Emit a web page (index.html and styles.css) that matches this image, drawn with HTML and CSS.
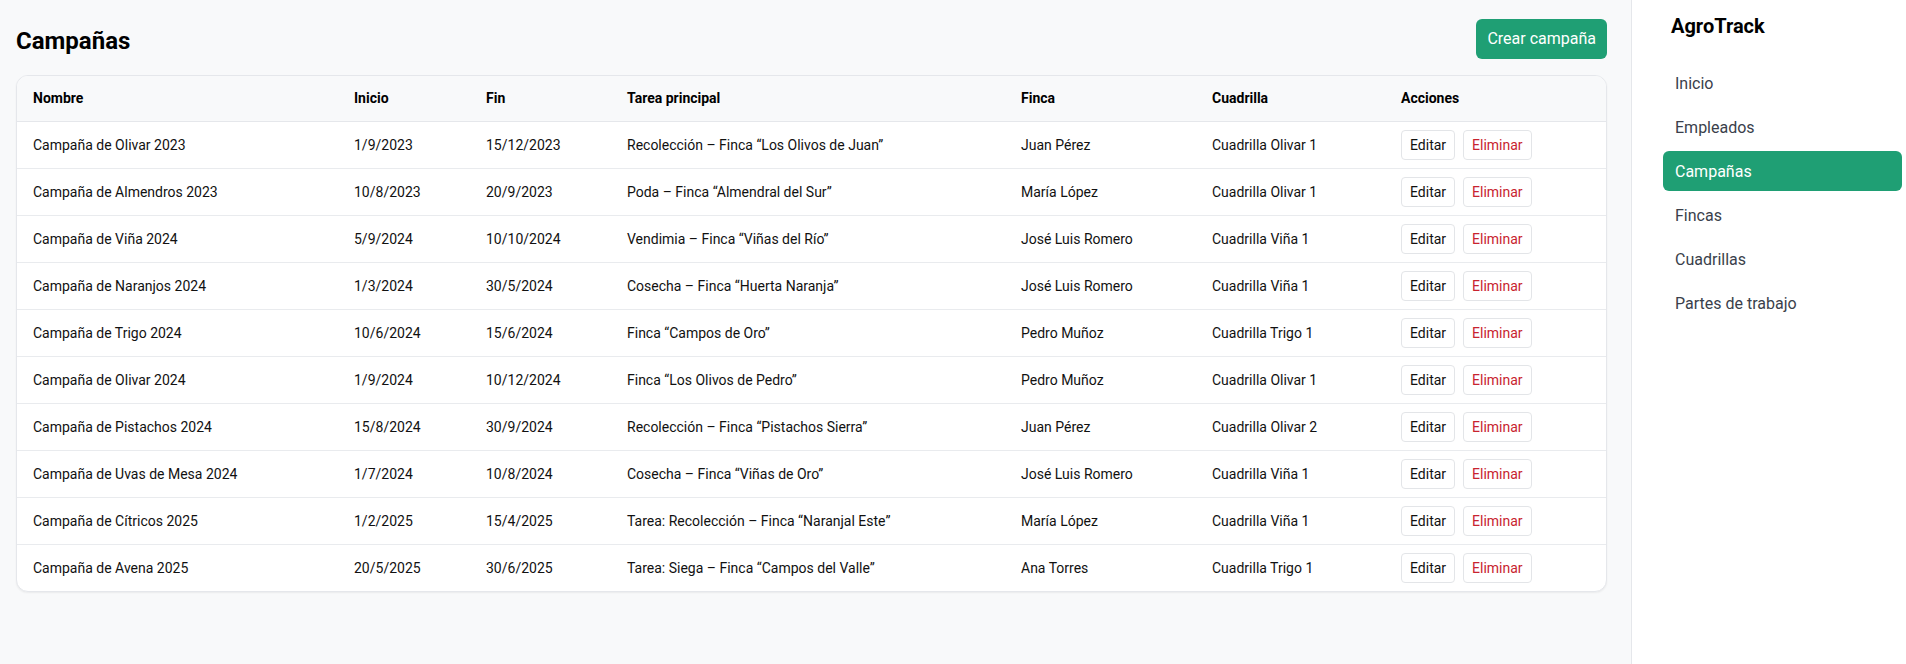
FILE: index.html
```html
<!DOCTYPE html>
<html lang="es">
<head>
<meta charset="utf-8">
<title>AgroTrack – Campañas</title>
<link rel="stylesheet" href="styles.css">
</head>
<body>
<div class="layout">
  <main class="main">
    <div class="page-header">
      <h1 class="page-title">Campañas</h1>
      <button class="btn-primary">Crear campaña</button>
    </div>
    <div class="card">
      <table class="table">
        <thead>
          <tr>
            <th class="c-nombre">Nombre</th>
            <th class="c-inicio">Inicio</th>
            <th class="c-fin">Fin</th>
            <th class="c-tarea">Tarea principal</th>
            <th class="c-finca">Finca</th>
            <th class="c-cuad">Cuadrilla</th>
            <th class="c-acc">Acciones</th>
          </tr>
        </thead>
        <tbody>
          <tr><td>Campaña de Olivar 2023</td><td>1/9/2023</td><td>15/12/2023</td><td>Recolección – Finca “Los Olivos de Juan”</td><td>Juan Pérez</td><td>Cuadrilla Olivar 1</td><td><div class="actions"><button class="btn-sm">Editar</button><button class="btn-sm danger">Eliminar</button></div></td></tr>
          <tr><td>Campaña de Almendros 2023</td><td>10/8/2023</td><td>20/9/2023</td><td>Poda – Finca “Almendral del Sur”</td><td>María López</td><td>Cuadrilla Olivar 1</td><td><div class="actions"><button class="btn-sm">Editar</button><button class="btn-sm danger">Eliminar</button></div></td></tr>
          <tr><td>Campaña de Viña 2024</td><td>5/9/2024</td><td>10/10/2024</td><td>Vendimia – Finca “Viñas del Río”</td><td>José Luis Romero</td><td>Cuadrilla Viña 1</td><td><div class="actions"><button class="btn-sm">Editar</button><button class="btn-sm danger">Eliminar</button></div></td></tr>
          <tr><td>Campaña de Naranjos 2024</td><td>1/3/2024</td><td>30/5/2024</td><td>Cosecha – Finca “Huerta Naranja”</td><td>José Luis Romero</td><td>Cuadrilla Viña 1</td><td><div class="actions"><button class="btn-sm">Editar</button><button class="btn-sm danger">Eliminar</button></div></td></tr>
          <tr><td>Campaña de Trigo 2024</td><td>10/6/2024</td><td>15/6/2024</td><td>Finca “Campos de Oro”</td><td>Pedro Muñoz</td><td>Cuadrilla Trigo 1</td><td><div class="actions"><button class="btn-sm">Editar</button><button class="btn-sm danger">Eliminar</button></div></td></tr>
          <tr><td>Campaña de Olivar 2024</td><td>1/9/2024</td><td>10/12/2024</td><td>Finca “Los Olivos de Pedro”</td><td>Pedro Muñoz</td><td>Cuadrilla Olivar 1</td><td><div class="actions"><button class="btn-sm">Editar</button><button class="btn-sm danger">Eliminar</button></div></td></tr>
          <tr><td>Campaña de Pistachos 2024</td><td>15/8/2024</td><td>30/9/2024</td><td>Recolección – Finca “Pistachos Sierra”</td><td>Juan Pérez</td><td>Cuadrilla Olivar 2</td><td><div class="actions"><button class="btn-sm">Editar</button><button class="btn-sm danger">Eliminar</button></div></td></tr>
          <tr><td>Campaña de Uvas de Mesa 2024</td><td>1/7/2024</td><td>10/8/2024</td><td>Cosecha – Finca “Viñas de Oro”</td><td>José Luis Romero</td><td>Cuadrilla Viña 1</td><td><div class="actions"><button class="btn-sm">Editar</button><button class="btn-sm danger">Eliminar</button></div></td></tr>
          <tr><td>Campaña de Cítricos 2025</td><td>1/2/2025</td><td>15/4/2025</td><td>Tarea: Recolección – Finca “Naranjal Este”</td><td>María López</td><td>Cuadrilla Viña 1</td><td><div class="actions"><button class="btn-sm">Editar</button><button class="btn-sm danger">Eliminar</button></div></td></tr>
          <tr><td>Campaña de Avena 2025</td><td>20/5/2025</td><td>30/6/2025</td><td>Tarea: Siega – Finca “Campos del Valle”</td><td>Ana Torres</td><td>Cuadrilla Trigo 1</td><td><div class="actions"><button class="btn-sm">Editar</button><button class="btn-sm danger">Eliminar</button></div></td></tr>
        </tbody>
      </table>
    </div>
  </main>
  <aside class="sidebar">
    <div class="brand">AgroTrack</div>
    <nav class="nav">
      <a class="nav-item">Inicio</a>
      <a class="nav-item">Empleados</a>
      <a class="nav-item active">Campañas</a>
      <a class="nav-item">Fincas</a>
      <a class="nav-item">Cuadrillas</a>
      <a class="nav-item">Partes de trabajo</a>
    </nav>
  </aside>
</div>
</body>
</html>
```

FILE: styles.css
```css
* { box-sizing: border-box; }
html, body { margin: 0; padding: 0; height: 100%; }
body {
  font-family: Roboto, "Liberation Sans", sans-serif;
  color: #111;
  background: #f8f9fa;
}
.layout {
  display: flex;
  height: 100vh;
}
.main {
  flex: 1;
  min-width: 0;
  background: #f8f9fa;
  padding: 19px 24px 16px 16px;
}
.page-header {
  display: flex;
  align-items: center;
  justify-content: space-between;
  height: 40px;
  margin-bottom: 16px;
}
.page-title {
  margin: 0;
  font-size: 24px;
  font-weight: 700;
  line-height: 1.2;
  color: #000;
  padding-top: 5px;
}
.btn-primary {
  font-family: inherit;
  font-size: 16px;
  line-height: 24px;
  height: 40px;
  padding: 8px 11px;
  white-space: nowrap;
  border: none;
  border-radius: 6px;
  background: #1f9f74;
  color: #fff;
}
.card {
  background: #fff;
  border: 1px solid #e5e7eb;
  border-radius: 12px;
  box-shadow: 0 1px 2px rgba(0,0,0,0.06);
  overflow: hidden;
}
.table {
  width: 100%;
  border-collapse: collapse;
  table-layout: fixed;
  font-size: 14px;
}
.table th {
  background: #f8f9fa;
  text-align: left;
  font-weight: 700;
  color: #000;
  padding: 12px 16px;
  line-height: 20px;
  height: 45px;
  border-bottom: 1px solid #e5e7eb;
}
.table td {
  padding: 8px 16px;
  height: 47px;
  line-height: 20px;
  color: #111;
  border-bottom: 1px solid #e9ebee;
  white-space: nowrap;
}
.table tbody tr:last-child td { border-bottom: none; }
.c-nombre { width: 321px; }
.c-inicio { width: 132px; }
.c-fin { width: 141px; }
.c-tarea { width: 394px; }
.c-finca { width: 191px; }
.c-cuad { width: 189px; }
.c-acc { width: auto; }
.actions {
  display: flex;
  gap: 8px;
}
.btn-sm {
  font-family: inherit;
  font-size: 14px;
  line-height: 20px;
  height: 30px;
  padding: 4px 8px;
  background: #fff;
  border: 1px solid #e3e5e8;
  border-radius: 4px;
  color: #111;
}
.btn-sm.danger { color: #c8232f; }
.sidebar {
  width: 275px;
  flex: none;
  background: #fff;
  border-left: 1px solid #e5e7eb;
  padding: 14px 4px 0 31px;
}
.brand {
  font-size: 20px;
  font-weight: 700;
  line-height: 24px;
  color: #000;
  padding-left: 8px;
  margin-bottom: 25px;
}
.nav {
  display: flex;
  flex-direction: column;
  gap: 4px;
}
.nav-item {
  display: block;
  padding: 9px 12px 7px;
  line-height: 24px;
  font-size: 16px;
  color: #3a3f4b;
  border-radius: 6px;
  text-decoration: none;
}
.nav-item.active {
  background: #1f9f74;
  color: #fff;
}
```
